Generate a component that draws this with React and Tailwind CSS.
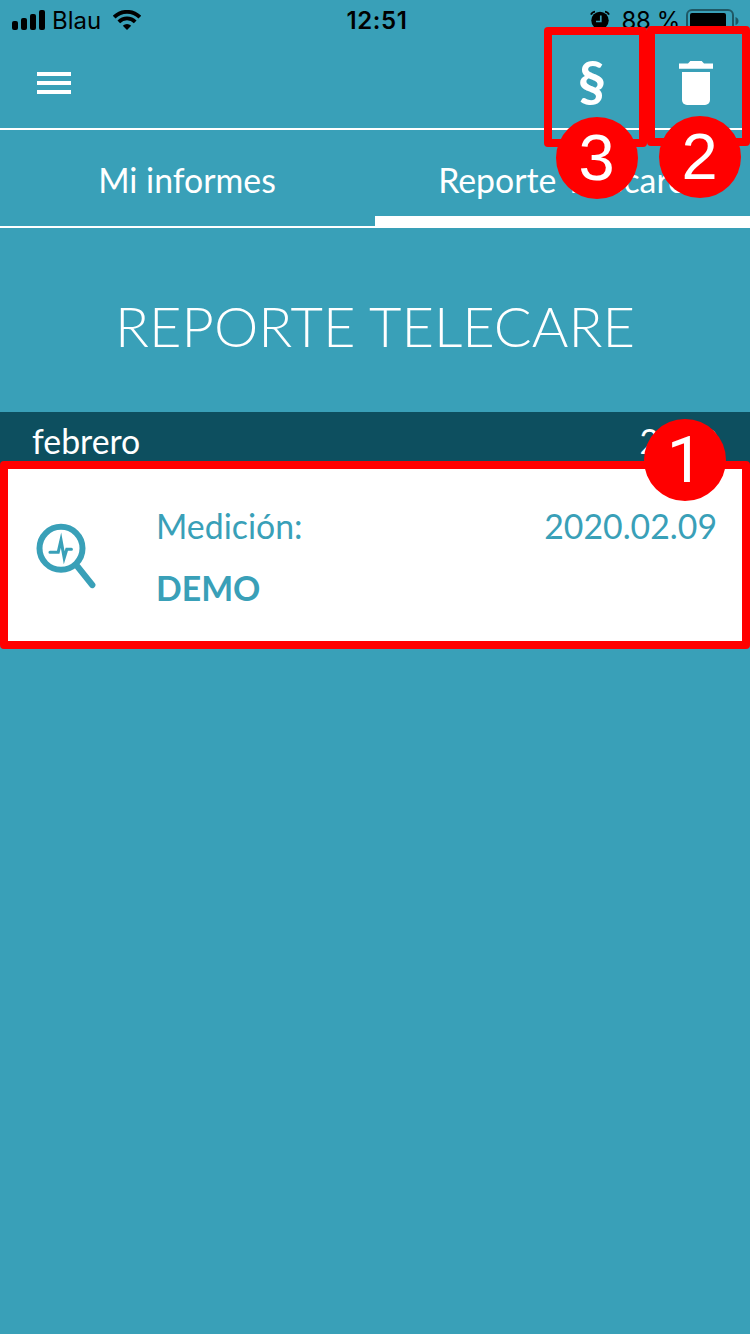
import clsx from "clsx";

const tabs = [
  { title: "Mi informes", active: false },
  { title: "Reporte Telecare", active: true },
];

const App = () => {
  return (
    <div className="relative h-[1334px] w-[750px] overflow-hidden bg-[#39a0b8] font-[Lato,sans-serif] text-white">
      <StatusBar />
      <Header />
      <div className="flex h-[98px]">
        {tabs.map((tab) => (
          <Tab key={tab.title} title={tab.title} active={tab.active} />
        ))}
      </div>

      <div className="flex h-[184px] items-center justify-center pt-3">
        <h1 className="text-[56px] leading-none font-light whitespace-nowrap">
          REPORTE TELECARE
        </h1>
      </div>

      <div className="flex h-[53px] items-center justify-between bg-[#0d4f5f] px-8 pt-[5px] text-[33.8px] leading-[52px]">
        <span>febrero</span>
        <span>2020</span>
      </div>
      <Report label="Medición:" name="DEMO" date="2020.02.09" />

      {/* callouts */}
      <div className="absolute top-[461px] left-0 h-[188px] w-[750px] rounded border-8 border-[#ff0000]" />
      <div className="absolute top-[27px] left-[544px] h-[120px] w-[103px] rounded border-8 border-[#ff0000]" />
      <div className="absolute top-[26px] left-[647px] h-[120px] w-[103px] rounded border-8 border-[#ff0000]" />
      <Badge
        number="1"
        className="top-[419px] left-[644px] font-[Roboto,sans-serif]"
      />
      <Badge
        number="2"
        className="top-[116px] left-[659px] pr-px pb-[2px] font-['Liberation_Sans',sans-serif]"
      />
      <Badge
        number="3"
        className="top-[117px] left-[556px] pr-px pb-[2px] font-['Liberation_Sans',sans-serif]"
      />
    </div>
  );
};

const StatusBar = () => {
  return (
    <div className="grid h-10 grid-cols-3 items-center pr-[11px] pl-3 font-[Inter,sans-serif] text-black">
      <div className="flex items-center">
        <div className="flex h-5 items-end gap-[3px]">
          <div className="h-[9px] w-[6px] rounded-[2px] bg-black" />
          <div className="h-3 w-[6px] rounded-[2px] bg-black" />
          <div className="h-4 w-[6px] rounded-[2px] bg-black" />
          <div className="h-5 w-[6px] rounded-[2px] bg-black" />
        </div>
        <span className="ml-[7px] pt-[2px] text-[24px] leading-8">Blau</span>
        <svg className="ml-3 h-5 w-[28px]" viewBox="0 0 28 20">
          <path d="M14 20l4.2-4.2a6 6 0 0 0-8.4 0z" />
          <path
            d="M5.8 11.8a11.6 11.6 0 0 1 16.4 0M1.2 7.1a18.1 18.1 0 0 1 25.6 0"
            fill="none"
            stroke="black"
            strokeWidth="3.8"
          />
        </svg>
      </div>
      <div className="pt-[2px] pl-[3px] text-center text-[24px] leading-8 font-semibold tracking-[0.6px]">
        12:51
      </div>
      <div className="flex items-center justify-end">
        <svg className="h-5 w-5" viewBox="0 0 20 20">
          <circle cx="10" cy="10.5" r="8.7" />
          <path
            d="M10.8 5.5v6H6"
            fill="none"
            stroke="#39a0b8"
            strokeWidth="1.7"
          />
          <path
            d="M1 4.6Q2 2 5 1.6M19 4.6Q18 2 15 1.6"
            fill="none"
            stroke="black"
            strokeWidth="1.8"
          />
        </svg>
        <span className="ml-3 pt-[2px] text-[24px] leading-8 tracking-[-0.4px] whitespace-nowrap">
          88 %
        </span>
        <svg className="ml-[6px] h-[25px] w-[53px]" viewBox="0 0 53 25">
          <rect
            x="1"
            y="2"
            width="46"
            height="22"
            rx="5"
            fill="none"
            stroke="black"
            strokeOpacity="0.45"
            strokeWidth="2"
          />
          <rect x="4" y="5" width="36" height="16" rx="2" />
          <path d="M49.5 9q3 1 3 4t-3 4z" fillOpacity="0.45" />
        </svg>
      </div>
    </div>
  );
};

const Header = () => {
  return (
    <div className="flex h-[90px] items-center justify-between border-b-2 border-white pr-[37px] pl-[37px]">
      <div className="mb-[2px] flex flex-col gap-[5px]">
        <div className="h-1 w-[34px] bg-white" />
        <div className="h-1 w-[34px] bg-white" />
        <div className="h-1 w-[34px] bg-white" />
      </div>
      <div className="flex items-center">
        <span className="mr-[73px] pb-[8px] text-[56px] leading-[60px] font-bold">
          §
        </span>
        <svg
          className="mb-[2px] h-[44px] w-[34px]"
          viewBox="0 0 34 44"
          fill="white"
        >
          <path d="M0 2.4h9l2.3-2.4h11.4L25 2.4h9v5.4H0z" />
          <path d="M3 11h28v28a5 5 0 0 1-5 5H8a5 5 0 0 1-5-5z" />
        </svg>
      </div>
    </div>
  );
};

const Tab = ({ title, active }) => {
  return (
    <div
      className={clsx(
        "flex w-1/2 justify-center border-white pr-px",
        active ? "border-b-12" : "border-b-2"
      )}
    >
      <span className="pt-[24px] text-[33.8px] leading-[52px] whitespace-nowrap">
        {title}
      </span>
    </div>
  );
};

const Report = ({ label, name, date }) => {
  return (
    <div className="flex h-[180px] bg-white pr-[33px] pl-[36px] text-[33.8px] leading-[62px] text-[#39a0b8]">
      <svg
        className="mt-[58px] h-[66px] w-[60px]"
        viewBox="0 0 60 66"
        fill="none"
        stroke="currentColor"
        strokeLinecap="round"
      >
        <circle cx="25" cy="25.3" r="21.5" strokeWidth="6" />
        <path d="M41.5 43.5L56.3 62" strokeWidth="6.2" />
        <path
          d="M14 29.3h8.2L25 17.2l3.2 17.6 2.6-8.5h4.6"
          strokeWidth="3.1"
          strokeMiterlimit="10"
        />
      </svg>
      <div className="ml-[60px] flex grow flex-col pt-[30px]">
        <div className="flex justify-between">
          <span>{label}</span>
          <span>{date}</span>
        </div>
        <span className="font-bold">{name}</span>
      </div>
    </div>
  );
};

const Badge = ({ number, className }) => {
  return (
    <div
      className={clsx(
        "absolute flex size-[82px] items-center justify-center rounded-full bg-[#ff0000] text-[65px] leading-none",
        className
      )}
    >
      {number}
    </div>
  );
};

export default App;
